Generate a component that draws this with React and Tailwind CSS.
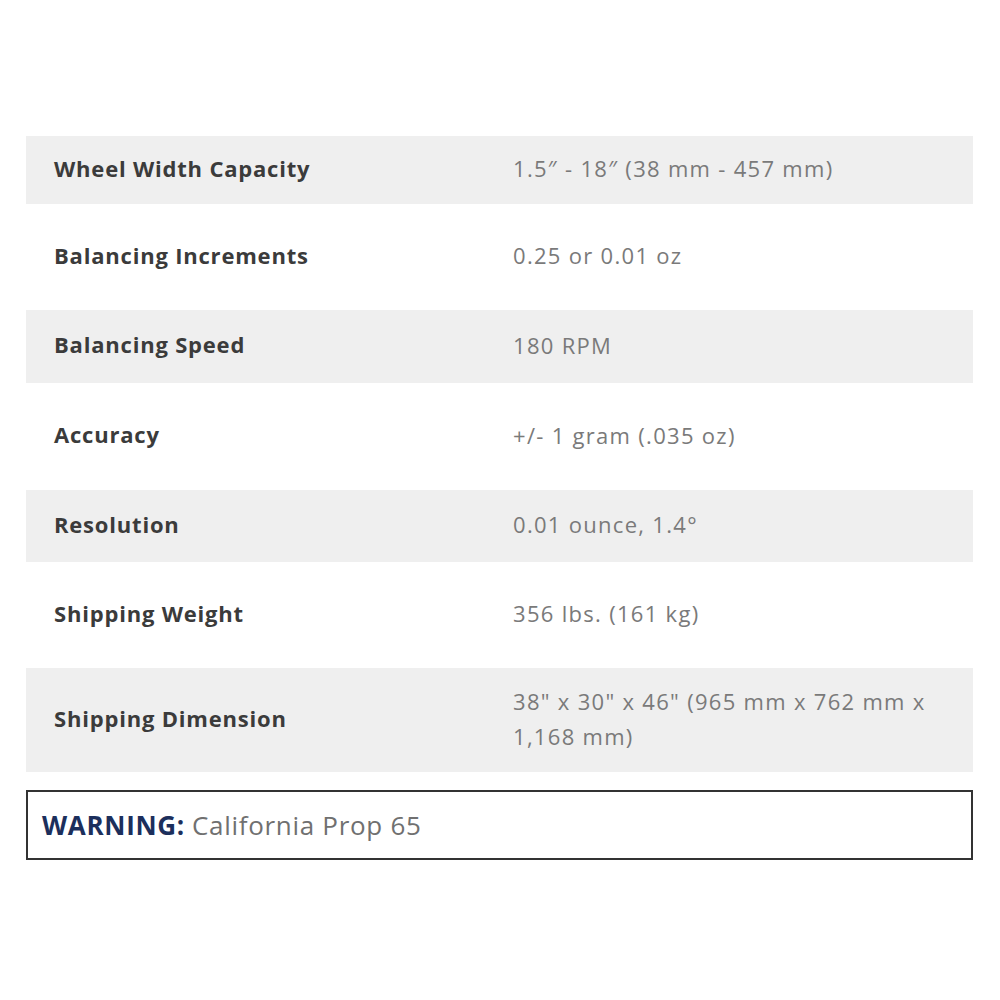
import React from 'react';

const specs = [
  { label: 'Wheel Width Capacity', value: '1.5″ - 18″ (38 mm - 457 mm)', h: 'h-[68px]', gray: true },
  { label: 'Balancing Increments', value: '0.25 or 0.01 oz', h: 'h-[106px]' },
  { label: 'Balancing Speed', value: '180 RPM', h: 'h-[73px]', gray: true },
  { label: 'Accuracy', value: '+/- 1 gram (.035 oz)', h: 'h-[107px]' },
  { label: 'Resolution', value: '0.01 ounce, 1.4°', h: 'h-[72px]', gray: true },
  { label: 'Shipping Weight', value: '356 lbs. (161 kg)', h: 'h-[106px]' },
  { label: 'Shipping Dimension', value: '38" x 30" x 46" (965 mm x 762 mm x 1,168 mm)', h: 'h-[104px]', gray: true },
];

export default function App() {
  return (
    <div className="w-[1000px] h-[1000px] bg-white pt-[136px] px-[26px] font-['Open_Sans',sans-serif]">
      {/* Spec table */}
      <div className="w-[947px]">
        {specs.map((s) => (
          <div
            key={s.label}
            className={`flex items-center ${s.h} ${s.gray ? 'bg-[#efefef]' : 'bg-white'}`}
          >
            <div className="w-[487px] pl-[28px] pb-[4px] text-[22px] font-bold text-[#3b3b3b] tracking-[0.8px]">
              {s.label}
            </div>
            <div className="flex-1 pr-[30px] pb-[3px] text-[22px] leading-[35px] text-[#7a7a7a] tracking-[1.3px]">
              {s.value}
            </div>
          </div>
        ))}
      </div>

      {/* Prop 65 notice */}
      <div className="mt-[18px] w-[947px] h-[70px] border-2 border-[#333] flex items-center pl-[14px] text-[26px] tracking-[0.7px]">
        <span className="font-bold text-[#1c2f5c]">WARNING:</span>
        <span className="ml-[7px] text-[#707070]">California Prop 65</span>
      </div>
    </div>
  );
}
